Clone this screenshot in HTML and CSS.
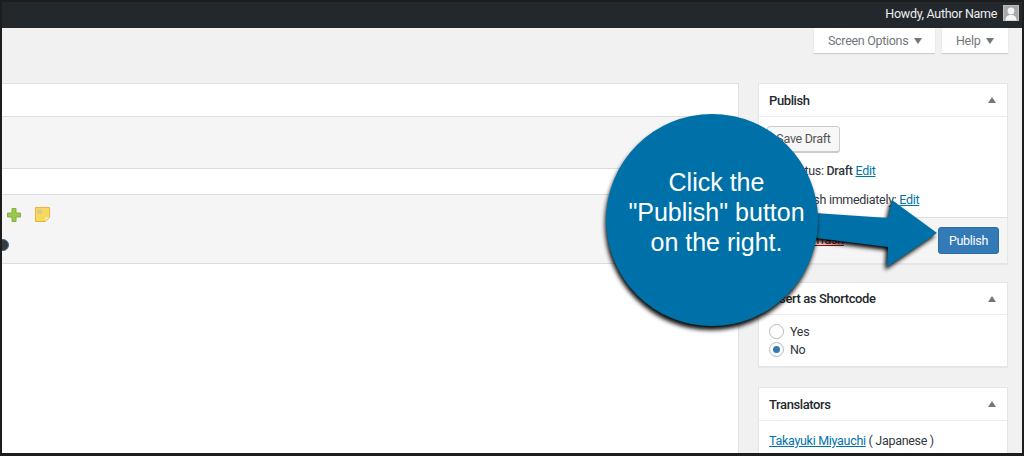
FILE: index.html
```html
<!DOCTYPE html>
<html lang="en">
<head>
    <meta charset="UTF-8">
    <title>Publish</title>
    <link rel="stylesheet" href="styles.css">
</head>
<body>
    <div class="frame">
        <div class="adminbar">
            <span>Howdy, Author Name</span>
            <svg class="avatar" width="16" height="16" viewBox="0 0 16 16">
                <rect x=".5" y=".5" width="15" height="15" fill="#a9a9a9" stroke="#bdbdbd"/>
                <circle cx="8" cy="6" r="3.4" fill="#f4f4f4"/>
                <path d="M2.500 15.500c0-4 2-5.500 5.500-5.500s5.500 1.500 5.500 5.500z" fill="#f4f4f4"/>
            </svg>
        </div>
        <div class="tabs">
            <div class="tab tab-screen">Screen Options <i class="down"></i></div>
            <div class="tab tab-help">Help <i class="down"></i></div>
        </div>
        <div class="columns">
            <div class="main">
                <div class="row title"></div>
                <div class="row gray toolbar"></div>
                <div class="row tabs-row"></div>
                <div class="row gray icons">
                    <i class="dot"></i>
                    <svg class="plus" width="14" height="14" viewBox="0 0 14 14">
                        <path d="M5 .5h4v4.500h4.500v4H9v4.500H5V9H.5V5H5z" fill="#9ac74c" stroke="#86ad48"/>
                    </svg>
                    <svg class="note" width="15" height="15" viewBox="0 0 15 15">
                        <path d="M.5.500h14v10l-4 4H.5z" fill="#f6d95f" stroke="#eeb33f"/>
                        <path d="M14 10.500h-3.500V14z" fill="#fdf3c4"/>
                        <circle cx="4.500" cy="4.500" r="2.500" fill="#d9c98a"/>
                    </svg>
                </div>
            </div>
            <div class="side">
                <div class="box box-publish">
                    <h3>Publish <i class="up"></i></h3>
                    <div class="publish-body">
                        <div class="draft">Save Draft</div>
                        <p class="status">Status: <b>Draft</b> <a href="#">Edit</a></p>
                        <p class="when">Publish immediately: <a href="#">Edit</a></p>
                    </div>
                    <div class="actions">
                        <a class="trash" href="#">Move to Trash</a>
                        <div class="publish">Publish</div>
                    </div>
                </div>
                <div class="box box-short">
                    <h3>Insert as Shortcode <i class="up"></i></h3>
                    <div class="radios">
                        <label><i class="radio"></i>Yes</label>
                        <label><i class="radio on"></i>No</label>
                    </div>
                </div>
                <div class="box box-last">
                    <h3>Translators <i class="up"></i></h3>
                    <p class="translator"><a href="#">Takayuki Miyauchi</a> ( Japanese )</p>
                </div>
            </div>
        </div>
    </div>

    <svg class="arrow" width="160" height="90" viewBox="790 190 160 90">
        <path d="M800 212L888 218 892 200 937 233 887 267 888 247 800 236z" fill="#0071a8"/>
    </svg>
    <div class="bubble">Click the<br>"Publish" button<br>on the right.</div>
</body>
</html>
```

FILE: styles.css
```css
* {
    box-sizing: border-box;
    margin: 0;
    padding: 0;
}
html, body {
    width: 1024px;
    height: 456px;
    overflow: hidden;
}
body {
    position: relative;
    color: #32373c;
    font-family: Roboto, sans-serif;
    font-size: 12.5px;
    letter-spacing: -.3px;
}
.frame {
    width: 1024px;
    height: 456px;
    border: 2px solid #1d1d1d;
    border-bottom-width: 3px;
    background: #f1f1f1;
    overflow: hidden;
}
a {
    color: #0073aa;
}
.adminbar {
    height: 26px;
    padding: 0 3px 4px 0;
    display: flex;
    justify-content: flex-end;
    align-items: center;
    gap: 6px;
    background: #23282d;
    color: #eee;
}
.tabs {
    height: 25px;
    padding-right: 14px;
    display: flex;
    justify-content: flex-end;
    gap: 7px;
}
.tab {
    height: 25px;
    display: flex;
    align-items: center;
    gap: 6px;
    background: #fff;
    box-shadow: 0 1px 1px rgba(0, 0, 0, .15);
    color: #72777c;
}
.tab-screen {
    width: 121px;
    padding-left: 14px;
}
.tab-help {
    width: 66px;
    padding-left: 14px;
}
.down, .up {
    display: inline-block;
    width: 0;
    height: 0;
    border-left: 4px solid transparent;
    border-right: 4px solid transparent;
}
.down {
    border-top: 6px solid #72777c;
}
.up {
    border-bottom: 6px solid #72777c;
}
.columns {
    padding-top: 30px;
    display: flex;
    gap: 19px;
}
.main {
    width: 737px;
    height: 372px;
    background: #fff;
    border: 1px solid #e0e0e0;
    border-left: 0;
}
.row {
    border-bottom: 1px solid #dcdcdc;
}
.gray {
    background: #f5f5f5;
}
.title {
    height: 33px;
}
.toolbar {
    height: 52px;
}
.tabs-row {
    height: 26px;
}
.icons {
    position: relative;
    height: 69px;
    padding: 12px 0 0 5px;
    display: flex;
    align-items: flex-start;
    gap: 14px;
}
.plus {
    margin-top: 1px;
}
.dot {
    position: absolute;
    left: -5px;
    top: 44px;
    width: 12px;
    height: 12px;
    border: 1px solid #2a6f9e;
    border-radius: 50%;
    background: #3a3a3a;
}
.side {
    width: 250px;
    display: flex;
    flex-direction: column;
}
.box {
    background: #fff;
    border: 1px solid #e5e5e5;
    box-shadow: 0 1px 1px rgba(0, 0, 0, .04);
}
.box-publish {
    margin-bottom: 18px;
}
.box-short {
    margin-bottom: 20px;
}
.box h3 {
    height: 33px;
    padding: 0 11px 0 10px;
    display: flex;
    justify-content: space-between;
    align-items: center;
    border-bottom: 1px solid #eee;
    color: #23282d;
    font-size: 13px;
    font-weight: 500;
    letter-spacing: -.4px;
}
.box-short h3 {
    height: 32px;
}
.publish-body {
    height: 100px;
    padding: 9px 8px 0;
}
.draft {
    width: 73px;
    height: 26px;
    line-height: 24px;
    text-align: center;
    background: #f7f7f7;
    border: 1px solid #ccc;
    border-radius: 3px;
    box-shadow: 0 1px 0 #ccc;
    color: #555;
}
.status, .when {
    padding-left: 20px;
    line-height: 18px;
}
.status {
    margin-top: 10px;
}
.when {
    margin-top: 11px;
}
.status b {
    font-weight: 500;
}
.actions {
    height: 46px;
    padding: 0 8px 0 10px;
    display: flex;
    justify-content: space-between;
    align-items: center;
    background: #f5f5f5;
    border-top: 1px solid #ddd;
}
.trash {
    margin-bottom: 3px;
    color: #a00;
}
.publish {
    width: 61px;
    height: 27px;
    line-height: 25px;
    text-align: center;
    background: #337ab7;
    border: 1px solid #2e6da4;
    border-radius: 3px;
    color: #fff;
}
.radios {
    height: 51px;
    padding: 9px 10px 0;
    display: flex;
    flex-direction: column;
    gap: 3px;
}
.radios label {
    height: 15px;
    display: flex;
    align-items: center;
    gap: 6px;
}
.radio {
    width: 15px;
    height: 15px;
    border: 1px solid #b4b9be;
    border-radius: 50%;
    background: #fff;
    display: flex;
    align-items: center;
    justify-content: center;
}
.on::after {
    content: "";
    width: 7px;
    height: 7px;
    border-radius: 50%;
    background: #337ab7;
}
.translator {
    padding: 11px 10px;
    line-height: 18px;
}
.box-last {
    height: 80px;
}
.arrow {
    position: absolute;
    left: 790px;
    top: 190px;
    filter: drop-shadow(-2px 3px 2px #000);
}
.bubble {
    position: absolute;
    left: 606px;
    top: 114px;
    width: 212px;
    height: 212px;
    padding: 53px 0 0 9px;
    border-radius: 50%;
    background: #0071a8;
    box-shadow: -1px 4px 4px rgba(0, 0, 0, .95);
    color: #fff;
    font-family: "Liberation Sans", sans-serif;
    font-size: 25px;
    letter-spacing: 0;
    line-height: 30px;
    text-align: center;
}
```
